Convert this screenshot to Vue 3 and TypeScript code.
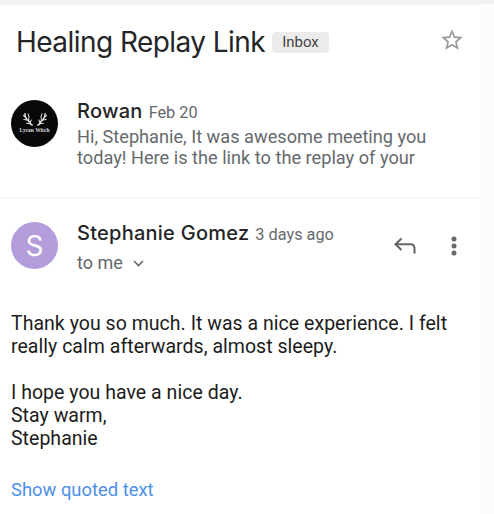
<template>
  <div class="mail">
    <main class="thread">
      <header class="subject">
        <h1 class="subject__title">Healing Replay Link</h1>
        <span class="subject__label">Inbox</span>
        <button type="button" class="icon-button subject__star" aria-label="Star">
          <svg width="26" height="26" viewBox="0 0 24 24" fill="#9a9c9f">
            <path d="M22 9.24l-7.19-.62L12 2 9.19 8.63 2 9.24l5.46 4.73L5.82 21 12 17.27 18.18 21l-1.63-7.03L22 9.24zM12 15.4l-3.76 2.27 1-4.28-3.32-2.88 4.38-.38L12 6.1l1.71 4.04 4.38.38-3.32 2.88 1 4.28L12 15.4z" />
          </svg>
        </button>
      </header>

      <article class="message message--collapsed">
        <div class="avatar avatar--dark">
          <svg class="avatar__antlers" width="26" height="16" viewBox="0 0 28 17" fill="none" stroke="#e0e0e0" stroke-linecap="round">
            <g v-for="side in antlers" :key="side" :transform="side">
              <path stroke-width="1.7" d="M11 15C8.500 15 9.500 12.500 7 10.500C4.500 8.500 3 7 3.200 3" />
              <path stroke-width="1.100" d="M4 7L1.500 4.500M5.500 9.500L2 9M7 10.500L7.500 6L6.500 3M8.500 12.500L10 9.500M8.500 13.500L5 13" />
            </g>
          </svg>
          <span class="avatar__caption">Lycan Witch</span>
        </div>
        <div class="message__info">
          <div class="message__line">
            <span class="message__sender">{{ collapsed.sender }}</span>
            <span class="message__date">{{ collapsed.date }}</span>
          </div>
          <p class="message__preview">
            <span v-for="line in collapsed.preview" :key="line">{{ line }}</span>
          </p>
        </div>
      </article>

      <article class="message message--open">
        <div class="avatar avatar--letter">S</div>
        <div class="message__info">
          <div class="message__line">
            <span class="message__sender">{{ opened.sender }}</span>
            <span class="message__date">{{ opened.date }}</span>
          </div>
          <div class="message__recipient">
            <span>to me</span>
            <svg width="11" height="7" viewBox="0 0 11 7" fill="none" stroke="#66696c" stroke-width="1.600">
              <path d="M1 1L5.500 5.500L10 1" />
            </svg>
          </div>
        </div>
        <div class="message__actions">
          <button type="button" class="icon-button" aria-label="Reply">
            <svg width="24" height="20" viewBox="0 0 24 20" fill="none" stroke="#66696c" stroke-width="2.100">
              <path d="M8.500 2.500L2.500 8.300L8.500 14.100M2.500 8.300H17.500Q21.500 8.300 21.500 12.500V17.500" />
            </svg>
          </button>
          <button type="button" class="icon-button" aria-label="More">
            <svg width="6" height="20" viewBox="0 0 6 20" fill="#66696c">
              <circle v-for="y in [3, 10, 17]" :key="y" cx="3" :cy="y" r="2.500" />
            </svg>
          </button>
        </div>
      </article>

      <section class="body">
        <p v-for="(paragraph, i) in opened.body" :key="i" class="body__paragraph">
          <span v-for="line in paragraph" :key="line">{{ line }}</span>
        </p>
        <a class="body__quoted">Show quoted text</a>
      </section>
    </main>
  </div>
</template>

<script setup lang="ts">
interface Message {
  sender: string
  date: string
  preview?: string[]
  body?: string[][]
}

const antlers = ['translate(0 0)', 'translate(28 0) scale(-1 1)']

const collapsed: Message = {
  sender: 'Rowan',
  date: 'Feb 20',
  preview: [
    'Hi, Stephanie, It was awesome meeting you',
    'today! Here is the link to the replay of your'
  ]
}

const opened: Message = {
  sender: 'Stephanie Gomez',
  date: '3 days ago',
  body: [
    ['Thank you so much. It was a nice experience. I felt', 'really calm afterwards, almost sleepy.'],
    ['I hope you have a nice day.', 'Stay warm,', 'Stephanie']
  ]
}
</script>

<style>
body {
  background: #fcfcfc;
}
</style>

<style scoped>
.mail {
  box-sizing: border-box;
  height: 514px;
  padding-right: 14px;
  overflow: hidden;
  background: #fcfcfc;
  border-top: 4px solid #f2f2f2;
  font-family: Roboto, "Liberation Sans", sans-serif;
  color: #66696c;
}

.thread {
  height: 510px;
  background: #fff;
  box-shadow: inset 0 3px 2px -1px #f8f8f8;
}

.icon-button {
  display: flex;
  padding: 0;
  border: 0;
  background: none;
}

.subject {
  display: flex;
  align-items: center;
  height: 76px;
  padding: 0 15px 0 16px;
}

.subject__title {
  width: 256px;
  margin: 0;
  font: 400 28px/36px Inter, sans-serif;
  letter-spacing: -0.55px;
  white-space: nowrap;
  color: #242527;
}

.subject__label {
  width: 57px;
  border-radius: 4px;
  background: #ececec;
  font-size: 15px;
  line-height: 21px;
  text-align: center;
  color: #444;
}

.subject__star {
  margin-top: -4px;
  margin-left: auto;
}

.message {
  display: flex;
  box-sizing: border-box;
  padding-left: 11px;
}

.message--collapsed {
  height: 118px;
  padding-top: 20px;
  border-bottom: 1px solid #f3f3f3;
}

.message--open {
  height: 114px;
  padding-top: 24px;
}

.avatar {
  flex: none;
  width: 47px;
  height: 47px;
  margin-right: 19px;
  border-radius: 50%;
}

.avatar--dark {
  display: flex;
  flex-direction: column;
  align-items: center;
  background: #080808;
}

.avatar__antlers {
  margin-top: 11px;
}

.avatar__caption {
  font: 700 5.5px/7px "Liberation Serif", serif;
  white-space: nowrap;
  color: #ddd;
}

.avatar--letter {
  background: #b39ddb;
  font: 400 28px/49px Inter, sans-serif;
  text-align: center;
  color: #fff;
}

.message__info {
  margin-top: -1px;
}

.message__line {
  display: flex;
  align-items: baseline;
  gap: 6px;
  height: 24px;
  line-height: 24px;
  white-space: nowrap;
}

.message__sender {
  font-family: Inter, sans-serif;
  font-size: 20px;
  font-weight: 500;
  letter-spacing: 0.25px;
  color: #242527;
}

.message__date {
  font-size: 16.3px;
}

.message__preview {
  margin: 3px 0 0;
  font-size: 18.2px;
  line-height: 21px;
}

.message__preview span,
.body__paragraph span {
  display: block;
  white-space: nowrap;
}

.message__recipient {
  display: flex;
  align-items: center;
  gap: 10px;
  margin-top: 6px;
  font-size: 18px;
  line-height: 24px;
}

.message__actions {
  display: flex;
  align-items: center;
  gap: 34px;
  height: 48px;
  margin-left: auto;
  margin-right: 23px;
}

.body {
  padding-left: 11px;
  font-size: 19.5px;
  line-height: 23px;
  letter-spacing: 0.03px;
  color: #1c1c1c;
}

.body__paragraph {
  margin: 0 0 23px;
}

.body__quoted {
  display: block;
  margin-top: 28px;
  font-size: 18.4px;
  letter-spacing: 0;
  color: #4d8fe8;
}
</style>
